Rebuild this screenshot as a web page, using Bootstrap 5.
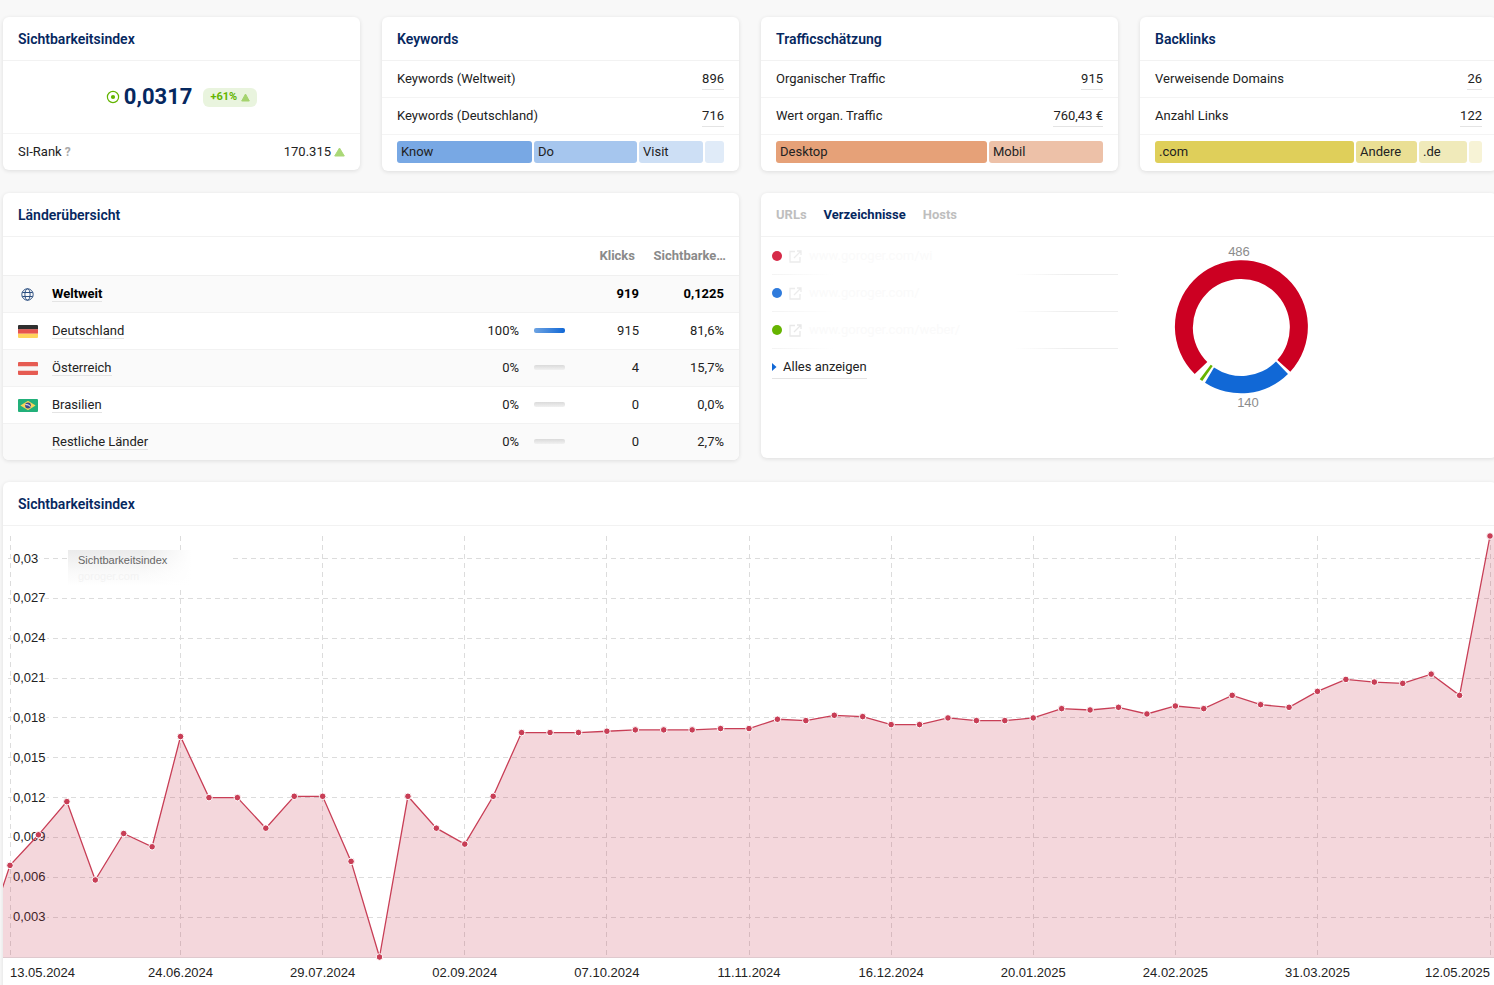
<!DOCTYPE html>
<html lang="de">
<head>
<meta charset="utf-8">
<meta name="viewport" content="width=device-width, initial-scale=1">
<title>Sichtbarkeitsindex</title>
<link href="https://cdn.jsdelivr.net/npm/bootstrap@5.3.0/dist/css/bootstrap.min.css" rel="stylesheet">
<style>
  body { background: #f8f8f8; color: #222; font: 13px/20px Roboto, "Liberation Sans", sans-serif; overflow-x: hidden; }
  a { color: inherit; text-decoration: none; }
  .board { margin: 17px -3px 0 3px; }
  .board > .row { --bs-gutter-x: 22px; --bs-gutter-y: 22px; }
  .panel { background: #fff; border-radius: 6px; box-shadow: 0 1px 4px rgba(0,0,0,.11); overflow: hidden; }
  .panel-head { height: 44px; padding: 0 15px; border-bottom: 1px solid #f2f2f2; color: #06285f; }
  .panel-head h2 { font-size: 14px; line-height: 20px; font-weight: 600; margin: 0; }
  .line { height: 37px; padding: 0 15px; border-bottom: 1px solid #f4f4f4; }
  .line:last-child { border-bottom: 0; height: 36px; }
  .dotted { border-bottom: 1px solid #e4e4e4; }
  .score { height: 73px; border-bottom: 1px solid #f4f4f4; }
  .score strong { font-size: 22px; line-height: 28px; color: #06285f; }
  .delta { background: #e9f4de; color: #63b400; border-radius: 6px; height: 19px; padding: 0 7px; margin-left: 11px; font-size: 11px; font-weight: 700; }
  .hint { color: #aaa; font-size: 12px; font-weight: 700; }
  .rank { gap: 3px; }
  .split { gap: 2px; padding: 6px 15px 8px; }
  .split span { flex-basis: 0; min-width: 0; height: 22px; line-height: 22px; border-radius: 3px; text-indent: 4px; white-space: nowrap; overflow: hidden; }
  .lands { table-layout: fixed; width: 100%; border-collapse: collapse; }
  .lands th, .lands td { height: 37px; padding: 0; text-align: right; white-space: nowrap; }
  .lands thead th { height: 38px; color: #8a8a8a; border-bottom: 1px solid #f0f0f0; }
  .lands tbody tr:nth-child(odd) { background: #fafafa; }
  .lands tbody tr + tr { border-top: 1px solid #f2f2f2; }
  .lands tbody tr:first-child { color: #000; font-weight: 700; }
  .lands .who { text-align: left; }
  .lands .ico { text-align: left; padding-left: 15px; }
  .lands .bar { padding-left: 15px; text-align: left; }
  .lands td.last { padding-right: 15px; }
  .lands th.last { padding-right: 13px; }
  .lands th.hits { padding-right: 4px; }
  .c-ico { width: 49px; } .c-pct { width: 80px; } .c-bar { width: 61px; } .c-hits { width: 59px; } .c-last { width: 100px; }
  .gauge { display: block; width: 31px; height: 5px; border-radius: 2px; background: linear-gradient(#dadada, #f1f1f1); overflow: hidden; }
  .gauge i { display: block; height: 5px; background: linear-gradient(90deg, #6ea3e2, #1168d6); }
  .tabs { gap: 17px; }
  .tabs button { border: 0; background: none; padding: 0; font-weight: 700; color: #bebebe; }
  .tabs button.active { color: #06285f; }
  .dirs { width: 357px; padding: 1px 0 0 11px; margin: 0; list-style: none; }
  .dirs li { height: 37px; gap: 7px; color: #fafafa; border-bottom: 1px solid; border-image: linear-gradient(90deg, #f3f3f3, #fff 18%, #fff 70%, #eee 85%) 1; }
  .dirs li:last-child { border: 0; color: #222; }
  .dot { width: 10px; height: 10px; border-radius: 50%; }
  .dirs a.all { gap: 6px; height: 22px; border-bottom: 1px solid #e4e4e4; }
  .pages { height: 221px; }
  .plot { position: relative; height: 470px; }
  .plot > svg { display: block; width: 100%; height: 100%; }
  .plot text, .ring text { font-family: "Liberation Sans", Arial, sans-serif; font-size: 13px; }
  .plot text { fill: #222; }
  .plot .ylab { stroke: #fff; stroke-width: 4px; paint-order: stroke; }
  .ring text { fill: #8c8c8c; text-anchor: middle; }
  .legend-box { position: absolute; left: 65px; top: 24px; width: 165px; height: 36px; padding: 2px 10px; font: 11px/16px "Liberation Sans", Arial, sans-serif; color: #666; background: linear-gradient(90deg, transparent 45%, #fff 75%), linear-gradient(#ebebeb, #f9f9f9 60%, #fff); }
  .legend-box small { display: block; font-size: 11px; color: #f3f3f3; }
</style>
</head>
<body>
<main class="board">
  <div class="row align-items-start">
    <div class="col-3">
      <section class="panel">
        <header class="panel-head d-flex align-items-center"><h2>Sichtbarkeitsindex</h2></header>
        <div class="score d-flex align-items-center justify-content-center">
          <svg class="me-1" width="14" height="14" viewBox="0 0 14 14" aria-hidden="true"><circle cx="7" cy="7" r="5.6" fill="none" stroke="#63b400" stroke-width="1.2"/><circle cx="7" cy="7" r="2.1" fill="#63b400"/></svg>
          <strong>0,0317</strong>
          <span class="delta d-flex align-items-center gap-1">+61% <svg width="9" height="9" viewBox="0 0 9 9" aria-hidden="true"><path d="M4.5 1 8.3 8H.7Z" fill="#a5d36f" stroke="#a5d36f" stroke-linejoin="round"/></svg></span>
        </div>
        <div class="line rank d-flex align-items-center">
          <span>SI-Rank</span><span class="hint">?</span>
          <span class="ms-auto">170.315</span><svg width="11" height="10" viewBox="0 0 11 10" aria-hidden="true"><path d="M5.5 1 10.3 9H.7Z" fill="#aad877" stroke="#aad877" stroke-linejoin="round"/></svg>
        </div>
      </section>
    </div>
    <div class="col-3">
      <section class="panel">
        <header class="panel-head d-flex align-items-center"><h2>Keywords</h2></header>
        <div class="line d-flex align-items-center justify-content-between"><span>Keywords (Weltweit)</span><a href="#" class="dotted">896</a></div>
        <div class="line d-flex align-items-center justify-content-between"><span>Keywords (Deutschland)</span><a href="#" class="dotted">716</a></div>
        <div class="split d-flex">
          <span style="flex-grow:135;background:#78a8e4">Know</span><span style="flex-grow:103;background:#a6c6ee">Do</span><span style="flex-grow:64;background:#cddff5">Visit</span><span style="flex-grow:19;background:#e0ebf8"></span>
        </div>
      </section>
    </div>
    <div class="col-3">
      <section class="panel">
        <header class="panel-head d-flex align-items-center"><h2>Trafficschätzung</h2></header>
        <div class="line d-flex align-items-center justify-content-between"><span>Organischer Traffic</span><a href="#" class="dotted">915</a></div>
        <div class="line d-flex align-items-center justify-content-between"><span>Wert organ. Traffic</span><a href="#" class="dotted">760,43 €</a></div>
        <div class="split d-flex">
          <span style="flex-grow:211;background:#e6a178">Desktop</span><span style="flex-grow:114;background:#edc1a8">Mobil</span>
        </div>
      </section>
    </div>
    <div class="col-3">
      <section class="panel">
        <header class="panel-head d-flex align-items-center"><h2>Backlinks</h2></header>
        <div class="line d-flex align-items-center justify-content-between"><span>Verweisende Domains</span><a href="#" class="dotted">26</a></div>
        <div class="line d-flex align-items-center justify-content-between"><span>Anzahl Links</span><a href="#" class="dotted">122</a></div>
        <div class="split d-flex">
          <span style="flex-grow:199;background:#dfcf5a">.com</span><span style="flex-grow:61;background:#eadf94">Andere</span><span style="flex-grow:48;background:#f0eaba">.de</span><span style="flex-grow:13;background:#f7f3d6"></span>
        </div>
      </section>
    </div>

    <div class="col-6">
      <section class="panel">
        <header class="panel-head d-flex align-items-center"><h2>Länderübersicht</h2></header>
        <table class="lands">
          <colgroup><col class="c-ico"><col><col class="c-pct"><col class="c-bar"><col class="c-hits"><col class="c-last"></colgroup>
          <thead><tr><th></th><th></th><th></th><th></th><th class="hits">Klicks</th><th class="last">Sichtbarke…</th></tr></thead>
          <tbody>
            <tr><td class="ico"><svg width="20" height="13" viewBox="0 0 20 13" aria-hidden="true"><g fill="none" stroke="#2c4f80"><circle cx="9.500" cy="6.500" r="5.700"/><ellipse cx="9.500" cy="6.500" rx="2.600" ry="5.700"/><path d="M4.300 4.500h10.400M4.300 8.500h10.400"/></g></svg></td><td class="who"><a href="#" class="dotted">Weltweit</a></td><td></td><td></td><td>919</td><td class="last">0,1225</td></tr>
            <tr><td class="ico"><svg width="20" height="13" viewBox="0 0 20 13" aria-hidden="true"><path fill="#2f2f2f" d="M0 1q0-1 1-1h18q1 0 1 1v3.500H0z"/><path fill="#e6544f" d="M0 4.300h20v4.400H0z"/><path fill="#ffd45c" d="M0 8.700h20V12q0 1-1 1H1q-1 0-1-1z"/></svg></td><td class="who"><a href="#" class="dotted">Deutschland</a></td><td>100%</td><td class="bar"><span class="gauge"><i style="width:100%"></i></span></td><td>915</td><td class="last">81,6%</td></tr>
            <tr><td class="ico"><svg width="20" height="13" viewBox="0 0 20 13" aria-hidden="true"><rect width="20" height="13" rx="1" fill="#e65b52"/><path fill="#f7f5f5" d="M0 4.300h20v4.400H0z"/></svg></td><td class="who"><a href="#" class="dotted">Österreich</a></td><td>0%</td><td class="bar"><span class="gauge"></span></td><td>4</td><td class="last">15,7%</td></tr>
            <tr><td class="ico"><svg width="20" height="13" viewBox="0 0 20 13" aria-hidden="true"><rect width="20" height="13" rx="1" fill="#22b07a"/><path fill="#f9d35a" d="m10 1.800 7.600 4.700-7.600 4.700-7.600-4.700z"/><circle cx="10" cy="6.500" r="2.900" fill="#3e4a8c"/><path d="M7.400 5.600q3-.4 5 1.900" fill="none" stroke="#fff"/></svg></td><td class="who"><a href="#" class="dotted">Brasilien</a></td><td>0%</td><td class="bar"><span class="gauge"></span></td><td>0</td><td class="last">0,0%</td></tr>
            <tr><td></td><td class="who"><a href="#" class="dotted">Restliche Länder</a></td><td>0%</td><td class="bar"><span class="gauge"></span></td><td>0</td><td class="last">2,7%</td></tr>
          </tbody>
        </table>
      </section>
    </div>
    <div class="col-6">
      <section class="panel">
        <header class="panel-head tabs d-flex align-items-center"><button type="button">URLs</button><button type="button" class="active">Verzeichnisse</button><button type="button">Hosts</button></header>
        <div class="pages d-flex align-items-start">
          <ul class="dirs">
            <li class="d-flex align-items-center"><span class="dot" style="background:#d62a48"></span><svg width="13" height="13" viewBox="0 0 13 13" aria-hidden="true"><path d="M6 1.500H1v10.500h10V7M8 1h4v4M12 1 5 8" fill="none" stroke="#ececec" stroke-width="1.300"/></svg>www.goroger.com/wi</li>
            <li class="d-flex align-items-center"><span class="dot" style="background:#2f7bdc"></span><svg width="13" height="13" viewBox="0 0 13 13" aria-hidden="true"><path d="M6 1.500H1v10.500h10V7M8 1h4v4M12 1 5 8" fill="none" stroke="#ececec" stroke-width="1.300"/></svg>www.goroger.com/</li>
            <li class="d-flex align-items-center"><span class="dot" style="background:#66b400"></span><svg width="13" height="13" viewBox="0 0 13 13" aria-hidden="true"><path d="M6 1.500H1v10.500h10V7M8 1h4v4M12 1 5 8" fill="none" stroke="#e8e8e8" stroke-width="1.300"/></svg>www.goroger.com/weber/</li>
            <li class="d-flex align-items-center"><a href="#" class="all d-flex align-items-center"><svg width="5" height="8" viewBox="0 0 5 8" aria-hidden="true"><path d="M0 0 4.500 4 0 8Z" fill="#1168d6"/></svg>Alles anzeigen</a></li>
          </ul>
          <svg class="ring" width="240" height="180" viewBox="0 0 240 180" role="img" aria-label="Verteilung der Verzeichnisse">
            <path fill="#cc0022" d="M76.700 137A66.500 66.500 0 1 1 172.300 134.700L159.300 123A48.500 48.500 0 1 0 89.300 125Z"/>
            <path fill="#1168d6" d="M170 137A66.500 66.500 0 0 1 87 145.700L96 130.500A48.500 48.500 0 0 0 158 124.500Z"/>
            <path fill="#66b400" d="M81.700 142.300 84.300 144 94.700 129 92.700 127.700Z"/>
            <text x="121" y="19">486</text><text x="130" y="170">140</text>
          </svg>
        </div>
      </section>
    </div>

    <div class="col-12">
      <section class="panel">
        <header class="panel-head d-flex align-items-center"><h2>Sichtbarkeitsindex</h2></header>
        <div class="plot">
          <svg id="trend" role="img" aria-label="Verlauf des Sichtbarkeitsindex"></svg>
          <div class="legend-box">Sichtbarkeitsindex<small>goroger.com</small></div>
        </div>
      </section>
    </div>
  </div>
</main>
<script src="https://cdn.jsdelivr.net/npm/bootstrap@5.3.0/dist/js/bootstrap.bundle.min.js"></script>
<script>
  // Weekly index values in units of 0.0001, starting 13.05.2024
  const weeks = [69,92,117,58,93,83,166,120,120,97,121,121,72,0,121,97,85,121,169,169,169,170,171,171,171,172,172,179,178,182,181,175,175,180,178,178,180,187,186,188,183,189,187,197,190,188,200,209,207,206,213,197,317];
  const before = 5;
  const ticks = { 0: '13.05.2024', 6: '24.06.2024', 11: '29.07.2024', 16: '02.09.2024', 21: '07.10.2024', 26: '11.11.2024', 31: '16.12.2024', 36: '20.01.2025', 41: '24.02.2025', 46: '31.03.2025', 52: '12.05.2025' };
  const svg = document.getElementById('trend');

  function draw() {
    const w = svg.clientWidth, left = 7, right = w - 7, base = 431, top = 10, last = weeks.length - 1;
    const step = (right - left) / (last + 0.07);
    const x = i => i === last ? right : left + i * step;
    const y = v => base - v * (base - top) / 317;
    let out = '';
    for (let v = 30; v <= 300; v += 30) {
      const gy = Math.floor(y(v)) + 0.5;
      out += `<path d="M5 ${gy}H${w}" stroke="#dcdcdc" stroke-dasharray="5 4"/>`;
    }
    for (const i in ticks) {
      const gx = Math.floor(x(+i)) + 0.5;
      out += `<path d="M${gx} ${top}V${base}" stroke="#dcdcdc" stroke-dasharray="5 4"/>`;
    }
    for (let v = 30; v <= 300; v += 30) {
      out += `<text class="ylab" x="10" y="${Math.round(y(v)) + 4}">${String(v / 10000).replace('.', ',')}</text>`;
    }
    for (const i in ticks) {
      const anchor = +i === 0 ? 'start' : +i === last ? 'end' : 'middle';
      out += `<text x="${x(+i)}" y="451" text-anchor="${anchor}">${ticks[i]}</text>`;
    }
    const pts = [[left - step, y(before)], ...weeks.map((v, i) => [x(i), y(v)])];
    const lineD = 'M' + pts.map(p => p.join(' ')).join('L');
    out += `<path d="${lineD}H${w}V${base}H${left - step}Z" fill="rgba(196,40,70,.19)"/>`;
    out += `<path d="M0 ${base + 0.5}H${w}" stroke="#dfc9ce"/>`;
    out += `<path d="${lineD}" fill="none" stroke="#c83e56" stroke-width="1.3"/>`;
    pts.slice(1).forEach(p => { out += `<circle cx="${p[0]}" cy="${p[1]}" r="3.3" fill="#c83e56" stroke="#fff"/>`; });
    svg.innerHTML = out;
  }
  draw();
  addEventListener('resize', draw);
</script>
</body>
</html>
